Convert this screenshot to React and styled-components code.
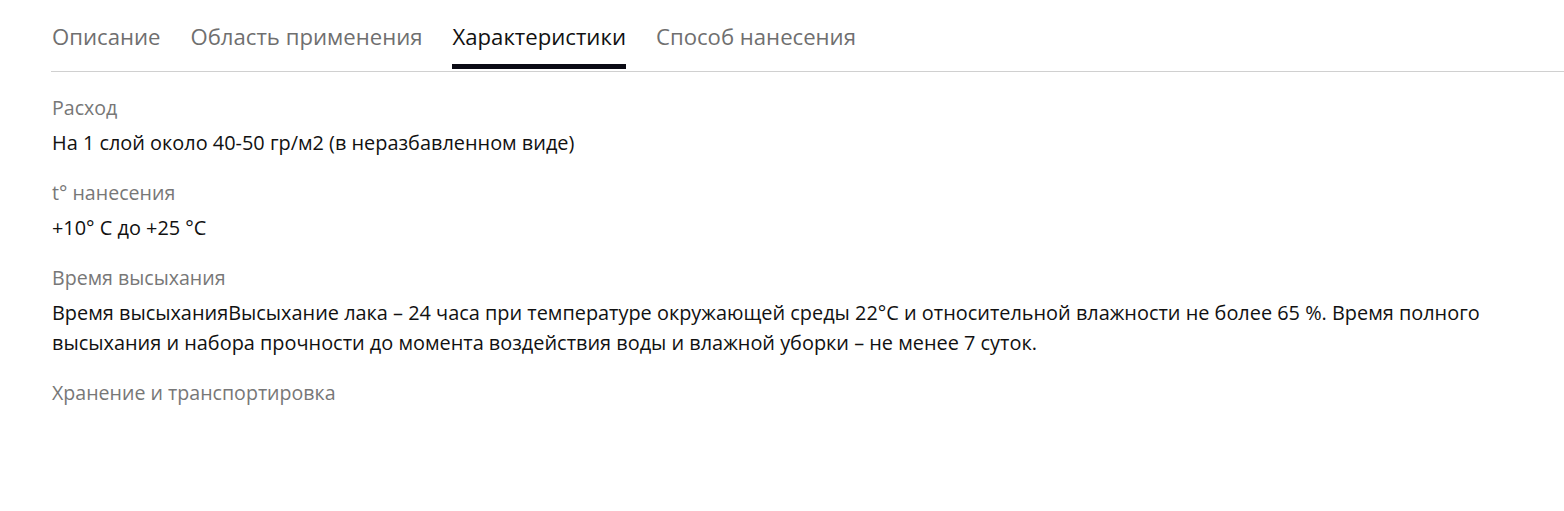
import React from "react";
import styled, { createGlobalStyle } from "styled-components";

const Global = createGlobalStyle`
  html, body { margin: 0; padding: 0; background: #fff; }
  body { font-family: "Open Sans", "Noto Sans", sans-serif; }
`;

const Page = styled.div`
  padding: 21px 0 0 51px;
`;

const Tabs = styled.div`
  display: flex;
  gap: 30px;
  border-bottom: 1px solid #d0d0d0;
  padding-left: 1px;
`;

const Tab = styled.div`
  font-size: 22.15px;
  line-height: 30px;
  color: ${(p) => (p.$active ? "#111" : "#6f6f6f")};
  padding-bottom: 13px;
  margin-bottom: 2px;
  border-bottom: 5px solid ${(p) => (p.$active ? "#0a0a14" : "transparent")};
  white-space: nowrap;
`;

const Content = styled.div`
  padding: 21px 0 0 1px;
  display: flex;
  flex-direction: column;
`;

const Group = styled.div`
  display: flex;
  flex-direction: column;
  gap: 5px;
  margin-bottom: 20px;
`;

const Label = styled.div`
  font-size: 19.6px;
  line-height: 30px;
  color: #777;
`;

const Value = styled.div`
  font-size: 19.9px;
  line-height: 30px;
  color: #111;
  padding-right: 60px;
`;

const items = [
  { label: "Расход", value: "На 1 слой около 40-50 гр/м2 (в неразбавленном виде)" },
  { label: "t° нанесения", value: "+10° С до +25 °С" },
  {
    label: "Время высыхания",
    value:
      "Время высыханияВысыхание лака – 24 часа при температуре окружающей среды 22°С и относительной влажности не более 65 %. Время полного высыхания и набора прочности до момента воздействия воды и влажной уборки – не менее 7 суток.",
  },
  { label: "Хранение и транспортировка" },
];

export default function App() {
  return (
    <Page>
      <Global />
      <Tabs>
        <Tab>Описание</Tab>
        <Tab>Область применения</Tab>
        <Tab $active>Характеристики</Tab>
        <Tab>Способ нанесения</Tab>
      </Tabs>
      <Content>
        {items.map((it) => (
          <Group key={it.label}>
            <Label>{it.label}</Label>
            {it.value && <Value>{it.value}</Value>}
          </Group>
        ))}
      </Content>
    </Page>
  );
}
